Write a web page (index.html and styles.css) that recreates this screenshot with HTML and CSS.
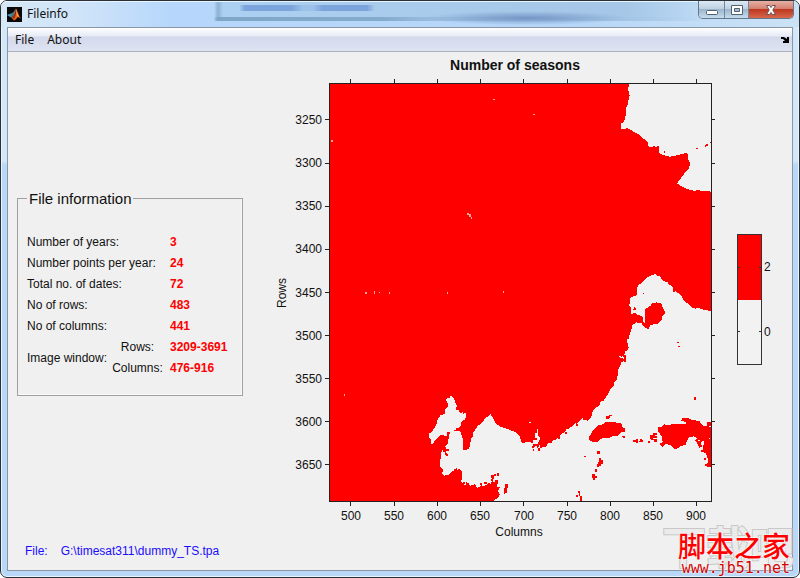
FILE: index.html
```html
<!DOCTYPE html>
<html lang="en">
<head>
<meta charset="utf-8">
<meta name="viewport" content="width=device-width, initial-scale=1">
<title>Fileinfo</title>
<link rel="stylesheet" href="styles.css">
</head>
<body>
<div class="window">
  <header class="titlebar">
    <svg class="app-icon" viewBox="0 0 15 15" aria-hidden="true">
      <rect width="15" height="15" fill="#080808"/>
      <path d="M0 8 4 6.500 6 8 4 10.500Z" fill="#4aa0b8"/>
      <path d="M4 6.500 6 5.500 9 1.500 7.500 7 4.500 10.500 3 9.500Z" fill="#397f95"/>
      <path d="M9 1.500C10.500 3 11 8 14 11.500L11 10C9.500 11 8.500 13 7 13.500L4.500 10.500C7 9 8 4 9 1.500Z" fill="#e8611d"/>
      <path d="M9 2C9.500 5 9 9 7 12L5.500 10.500C7.500 8 8 5 9 2Z" fill="#8f2b12"/>
      <path d="M9 2C10 5 11 8 12 10L10 9Z" fill="#ffb257"/>
    </svg>
    <h1 class="caption">Fileinfo</h1>
    <div class="controls">
      <button class="control" type="button" aria-label="Minimize">
        <svg viewBox="0 0 12 12"><rect x=".5" y="6.500" width="11" height="4" rx="1" fill="#fff" stroke="#53606e"/></svg>
      </button>
      <button class="control" type="button" aria-label="Maximize">
        <svg viewBox="0 0 12 12"><path d="M.5 1.500h11v9H.5Z" fill="#fff" stroke="#53606e"/><path d="M3.500 4.500h5v3h-5Z" fill="#a8bdd2" stroke="#53606e"/></svg>
      </button>
      <button class="control control-close" type="button" aria-label="Close">
        <svg viewBox="0 0 12 12"><path d="M1.500 1.500h3L6 3.500 7.500 1.500h3L7.800 6l2.700 4.500h-3L6 8.500 4.500 10.500h-3L4.200 6Z" fill="#fff" stroke="#6b5055"/></svg>
      </button>
    </div>
  </header>
  <div class="client">
    <nav class="menubar">
      <button class="menu" type="button">File</button>
      <button class="menu" type="button">About</button>
      <svg class="dock" viewBox="0 0 8 6" aria-hidden="true"><path d="M0 0h3l3 2V0h2v6H2V4h2L2 2H0Z" fill="#000"/></svg>
    </nav>
    <main class="content">
      <section class="side">
        <fieldset class="info">
          <legend>File information</legend>
          <table>
            <colgroup><col class="col-name"><col class="col-sub"><col></colgroup>
            <tbody>
              <tr><th colspan="2">Number of years:</th><td>3</td></tr>
              <tr><th colspan="2">Number points per year:</th><td>24</td></tr>
              <tr><th colspan="2">Total no. of dates:</th><td>72</td></tr>
              <tr><th colspan="2">No of rows:</th><td>483</td></tr>
              <tr><th colspan="2">No of columns:</th><td>441</td></tr>
              <tr><th rowspan="2">Image window:</th><th class="sub">Rows:</th><td>3209-3691</td></tr>
              <tr><th class="sub">Columns:</th><td>476-916</td></tr>
            </tbody>
          </table>
        </fieldset>
        <p class="path"><span>File:</span><span>G:\timesat311\dummy_TS.tpa</span></p>
      </section>
      <svg class="chart" viewBox="258 52 534 518" role="img" aria-label="Number of seasons">
        <defs><clipPath id="plot"><rect x="330" y="84" width="381" height="417"/></clipPath></defs>
        <rect x="330" y="84" width="381" height="417" fill="#f00"/>
        <g clip-path="url(#plot)" shape-rendering="crispEdges">
          <!-- areas without a season -->
          <g fill="#f1f1f1">
            <path transform="translate(590 75) scale(.33333)" d="M116 24V36L114 42 119 62 115 76 112 92 108 100 107 120 102 140 93 146 92 160 103 163 108 160 118 161 130 170 146 178 158 190 172 198 174 214 188 216 192 213 200 216 200 212 207 214 206 234 222 241 240 245 262 241 280 236 292 233 294 250 301 268 296 280 284 294 272 310 261 325 272 333 290 342 310 347 328 346 340 349 350 347 368 352V24Z"/>
            <path transform="translate(570 265) scale(.33333)" d="M428 139 400 134 385 128 376 131 368 129 350 113 338 102 336 94 330 88 312 75 306 62 298 60 294 53 280 48 268 33 260 32 256 25 250 30 240 32 226 42 216 54 204 60 200 76 201 87 198 92 184 96 180 102 181 112 176 122 184 130 182 146 205 149 218 155 218 176 200 172 186 180 184 195 178 212 177 222 170 223 173 235 176 248 172 255 165 260 163 269 155 275 146 271 146 277 156 278 162 282 160 290 154 292 150 305 143 316 144 326 140 345 134 350 130 365 118 380 100 410H428Z"/>
            <path transform="translate(560 385) scale(.33333)" d="M166-4 150 14 146 26 138 36 130 48 122 50 118 62 108 68 100 76 96 84 94 98 84 108 78 104 72 107 68 100 62 104 58 110 50 116 46 114 40 122 24 132 18 138 0 150V360H456V-4Z"/>
            <path transform="translate(420 385) scale(.33333)" d="M454 127 438 134 438 144 432 146 432 152 424 152 420 162 410 160 408 166 398 166 394 174 384 174 380 184 370 186 362 190 358 180 354 190 348 180 340 190 336 188 342 174 320 170 312 174 304 172 300 156 284 140 262 132 240 124 226 114 218 98 210 86 206 94 196 98 186 114 174 122 160 142 158 156 154 160 150 180 148 190 140 194 130 194 128 160 122 142 112 134 122 124 124 110 134 104 138 98 138 82 130 86 128 80 120 86 116 76 108 76 110 62 104 46 98 36 92 32 88 40 80 40 78 46 84 56 84 66 76 74 76 86 60 92 50 110 50 116 40 134 36 142 26 144 26 156 32 162 34 176 38 176 46 166 60 152 66 149 80 154 82 142 90 140 86 160 82 178 70 190 62 206 62 216 60 246 70 256 66 266 72 272 90 268 92 262 100 258 104 252 112 256 116 250 124 256 126 266 124 292 136 304 138 292 146 294 150 302 164 298 172 308 182 304 184 298 188 304 200 300 206 292 212 296 216 288 230 296 230 306 240 306 234 318 240 328 232 340 222 346 222 360H454Z"/>
            <path transform="translate(420 385) scale(.33333)" d="M350 132h3v12h-3ZM346 145h8l2 10 5 4-8 18h-13v-12h6ZM322 110h9l5 4h-6l-3-2h-5Z"/>
            <path d="M467 213h2v1h2v3h1v2h-1v-2h-2v-2h-2ZM533 114h2v1h-2ZM493 99h2v1h-2ZM331 140h2v2h-2ZM344 394h1v2h-1ZM365 292h2v2h-2ZM374 291h1v3h-1ZM379 292h1v1h-1ZM389 292h1v2h-1ZM447 292h1v2h-1ZM503 291h1v2h-1Z" fill="#ffa89c"/>
          </g>
          <!-- islands with seasons -->
          <g fill="#f00">
            <path transform="translate(590 75) scale(.33333)" d="M343 209h6v-3h6v6h-6v4h-4ZM318 219h6v4h-6ZM359 200h3v-6h4v12h-3ZM222 229h3v5h-3Z"/>
            <path transform="translate(570 265) scale(.33333)" d="M224 134 236 126 244 120 246 114 254 115 260 112 274 116 278 126 284 140 284 148 278 152 274 166 264 176 252 178 242 180 236 193 226 188 216 180 222 170 223 154ZM190 126h6v4h3v6h-10v-4h4ZM218 83h4v4h-4ZM320 231h6v4h-6ZM325 242h4v5h-4ZM312 68h4v12h-6v-7h2ZM188 145h10v4h-10ZM160 270h7v20h-5Z"/>
            <path transform="translate(560 385) scale(.33333)" d="M88 154 96 142 102 132 116 120 128 118 138 110 152 110 166 112 184 116 188 128 196 130 196 140 184 140 172 154 160 152 146 160 126 160 112 170 98 172 88 164ZM138 93h10v-4h7v4h-6v5h-3v5h-6ZM187 154h9v6h-8ZM219 166h10v5h-10ZM228 163h6v10h-6ZM236 167h5v-5h4v4h4v6h-12ZM270 150h8v-6h14v5h-8v5h6v5h-10v5h-8ZM280 163h12v9h-10ZM265 167h5v6h-5ZM111 197h8v9h-8ZM72 212h5v5h-5ZM117 220h5v6h8v10h-6v6h-7v4h-7v-10h5ZM106 252h4v8h-4ZM97 268h9v4h4v6h-4v6h-7v-5h-4v-7ZM54 318h6v6h-6ZM56 325h5v8h-5ZM47 329h7v6h-7ZM60 333h5v14h-4ZM403 37h4v7h-4Z"/>
            <path transform="translate(560 385) scale(.33333)" d="M293 136 294 126 306 126 312 118 328 120 344 116 358 118 378 116 376 110 364 108 365 100 386 100 394 104 406 106 418 108 424 116 430 122 442 122 440 112 456 112V246H440V236L446 232 442 216 436 204 430 202 430 182 432 170 426 168 422 176 428 184 418 188 412 176 406 166 410 160 402 154 388 156 380 168 378 178 362 184 350 192 340 190 330 180 316 176 308 186 298 178 308 170 306 156ZM424 194h8v6h-8Z"/>
            <path transform="translate(560 385) scale(.33333)" d="M432 220h5v6h-5ZM434 237h6v7h-6ZM14 142h7v5h-7ZM48 117h6v6h-6Z"/>
            <path transform="translate(420 385) scale(.33333)" d="M68 190h5v-5h5v8h8v6h-9v4h5v7h-7v-8h-7ZM78 206h7v6h-7ZM213 270h10v-4h5v6h-6v9h-7ZM231 265h7v7h-7ZM255 298h8v12h-2v14h-6v4h-4v-18h4ZM212 283h7v6h-7ZM226 286h7v12h-8ZM193 291h7v7h-7ZM180 295h6v6h-6ZM108 249h4v8h-4ZM128 290h6v8h-6ZM138 307h5v4h-5ZM98 135h10v-5h6v7h-12ZM346 160h4v5h-4ZM354 189h6v9h-6ZM338 191h5v7h-5ZM362 165h5v6h-5ZM400 156h10v6h-10Z"/>
          </g>
          <path transform="translate(560 385) scale(.33333)" d="M448 122h6v4h-6ZM446 158h4v4h-4ZM414 164h6v5h-6Z" fill="#f1f1f1"/>
          <path d="M644.500 309v14" fill="none" stroke="#f1f1f1"/>
        </g>
        <g fill="none" stroke="#222" shape-rendering="crispEdges">
          <path d="M329.500 83.500H711.500V501.500H329.500Z"/>
          <path d="M350.500 501v5M394.500 501v5M437.500 501v5M480.500 501v5M523.500 501v5M567.500 501v5M610.500 501v5M653.500 501v5M696.500 501v5M350.500 79v5M394.500 79v5M437.500 79v5M480.500 79v5M523.500 79v5M567.500 79v5M610.500 79v5M653.500 79v5M696.500 79v5"/>
          <path d="M325 119.500h4M325 163.500h4M325 206.500h4M325 249.500h4M325 292.500h4M325 335.500h4M325 378.500h4M325 421.500h4M325 464.500h4M711 119.500h4M711 163.500h4M711 206.500h4M711 249.500h4M711 292.500h4M711 335.500h4M711 378.500h4M711 421.500h4M711 464.500h4"/>
        </g>
        <text class="chart-title" x="515" y="70">Number of seasons</text>
        <g class="ticks-y">
          <text x="322" y="124">3250</text><text x="322" y="167">3300</text><text x="322" y="210">3350</text>
          <text x="322" y="253">3400</text><text x="322" y="297">3450</text><text x="322" y="340">3500</text>
          <text x="322" y="383">3550</text><text x="322" y="426">3600</text><text x="322" y="469">3650</text>
        </g>
        <g class="ticks-x">
          <text x="351" y="520">500</text><text x="394" y="520">550</text><text x="437" y="520">600</text>
          <text x="480" y="520">650</text><text x="524" y="520">700</text><text x="567" y="520">750</text>
          <text x="610" y="520">800</text><text x="653" y="520">850</text><text x="696" y="520">900</text>
        </g>
        <text class="axis" x="519" y="536">Columns</text>
        <text class="axis" transform="translate(286 293) rotate(-90)">Rows</text>
        <g shape-rendering="crispEdges">
          <rect x="738" y="235" width="24" height="65" fill="#f00"/>
          <rect x="738" y="300" width="24" height="64" fill="#f2f2f2"/>
          <path d="M737.500 234.500h24v130h-24ZM738 267.500h2M759 267.500h2M738 331.500h2M759 331.500h2" fill="none" stroke="#333"/>
        </g>
        <text class="key" x="764" y="271">2</text>
        <text class="key" x="764" y="336">0</text>
      </svg>
    </main>
  </div>
  <aside class="stamp">
    <span class="stamp-back">下载吧</span>
    <span class="stamp-name">脚本之家</span>
    <span class="stamp-site">www.jb51.net</span>
  </aside>
</div>
</body>
</html>
```
FILE: styles.css
```css
* { box-sizing: border-box; }

body {
  margin: 0;
  background: #fff;
  font-family: "Liberation Sans", Arial, sans-serif;
  font-size: 12px;
  color: #111;
}

.window {
  position: relative;
  display: flex;
  flex-direction: column;
  min-height: 100vh;
  padding: 0 6px 6px;
  border: 1px solid #2b2f36;
  border-radius: 7px;
  box-shadow: inset 0 0 0 1px #e6f5ff;
  background: linear-gradient(180deg, #d3e7fb 0, #d3e7fb 160px, #b9d8f8 164px, #b9d8f8 100%);
  overflow: hidden;
}

.titlebar {
  display: flex;
  align-items: flex-start;
  height: 26px;
  margin: 0 -6px;
  padding: 0 5px 0 6px;
  box-shadow: inset 0 1px 0 #e6f5ff;
  background:
    linear-gradient(90deg, transparent 238px, #7ba3dc 244px, #7ba3dc 290px, #9cc2ea 302px, #9cc2ea 312px, #7ba3dc 322px, #7ba3dc 366px, transparent 374px) 0 4px / 100% 6px no-repeat,
    radial-gradient(ellipse 100px 7px at 525px 17px, #7396c6, transparent),
    linear-gradient(90deg, transparent 213px, #7fa6c6 217px, #84abcb 380px, #9dc0e0 440px, transparent 700px) 0 16px / 100% 4px no-repeat,
    linear-gradient(90deg, transparent 213px, #8cb1d2 217px, #acd0f1 222px, #a5c6e6 620px, transparent 710px) 0 0 / 100% 20px no-repeat,
    linear-gradient(90deg, #d4e8f8, #d2e5f8 70px, #b6d7fb 170px, #b5d6f8 560px, #cbe2f5);
}

.app-icon { width: 15px; height: 15px; margin-top: 6px; }

.caption {
  flex: 1;
  margin: 4px 0 0 5px;
  font: 12px/17px "Noto Sans", sans-serif;
}

.controls {
  display: flex;
  height: 18px;
  border: 1px solid #63788c;
  border-top: 0;
  border-radius: 0 0 5px 5px;
  overflow: hidden;
}

.control {
  display: grid;
  place-items: center;
  width: 26px;
  padding: 0;
  border: 0;
  border-right: 1px solid #72869a;
  background: linear-gradient(#dce9f5, #bdcfe0 48%, #9db6ce 50%, #c5dced);
}

.control svg { width: 12px; height: 12px; }

.control + .control { width: 24px; }

.controls .control-close {
  width: 44px;
  border-right: 0;
  background: linear-gradient(#e6b0a5, #d47e6d 48%, #bd3820 50%, #d9674b);
}

.client {
  flex: 1;
  display: flex;
  flex-direction: column;
  border: 1px solid #8896a5;
  background: #f0f0f0;
}

.menubar {
  display: flex;
  align-items: center;
  height: 24px;
  padding: 0 3px 0 7px;
  gap: 13px;
  border-bottom: 1px solid #adb1be;
  background: linear-gradient(#fff, #e6ebf5 8px, #d3d8ec 9px, #dfe4f3);
}

.menu {
  padding: 0;
  border: 0;
  background: none;
  font: 12px/18px "Noto Sans", sans-serif;
  color: #111;
}

.dock { width: 8px; height: 6px; margin-left: auto; }

.content {
  flex: 1;
  display: grid;
  grid-template-columns: 250fr 534fr;
}

.side {
  display: flex;
  flex-direction: column;
  padding: 138px 15px 11px 9px;
}

.info {
  margin: 0;
  padding: 25px 4px 16px 9px;
  border: 1px solid #a0a0a0;
  box-shadow: inset -1px -1px 0 #fafafa;
}

.info legend { padding: 0 1px 0 2px; font-size: 15px; line-height: 17px; }

.info table {
  width: 100%;
  border-collapse: collapse;
  table-layout: fixed;
}

.col-name { width: 78px; }
.col-sub { width: 65px; }

.info th,
.info td {
  height: 21px;
  padding: 0;
  font-weight: normal;
  line-height: 15px;
  text-align: left;
  white-space: nowrap;
}

.info .sub { text-align: center; }

.info td { font-weight: bold; color: #f00; }

.path {
  display: flex;
  gap: 13px;
  margin: auto 0 0 8px;
  line-height: 15px;
  color: #1a0dff;
}

.chart {
  display: block;
  width: 100%;
  height: auto;
  font-size: 12px;
  fill: #111;
}

.chart-title { font-size: 14px; font-weight: bold; text-anchor: middle; }
.ticks-y { text-anchor: end; }
.ticks-x, .axis { text-anchor: middle; }

.stamp {
  position: absolute;
  right: 5px;
  bottom: 2px;
  display: grid;
  grid-template-rows: 44px 14px;
  width: 132px;
  white-space: nowrap;
}

.stamp-back {
  grid-area: 1 / 1 / 3 / 2;
  font: bold 44px/56px "Noto Sans CJK SC", sans-serif;
  color: #ebebeb;
  -webkit-text-stroke: 2px #c8c8c8;
  paint-order: stroke fill;
}

.stamp-name {
  grid-area: 1 / 1 / 2 / 2;
  align-self: end;
  justify-self: end;
  margin-right: 4px;
  font: 500 28px/32px "Noto Sans CJK SC", sans-serif;
  color: #f00;
  text-shadow: 0 0 2px #fff, 0 0 2px #fff;
}

.stamp-site {
  grid-area: 2 / 1 / 3 / 2;
  justify-self: end;
  margin-right: 4px;
  font: 15px/14px "DejaVu Sans Mono", monospace;
  color: #d40000;
  text-shadow: 0 0 2px #fff, 0 0 2px #fff;
}
```
